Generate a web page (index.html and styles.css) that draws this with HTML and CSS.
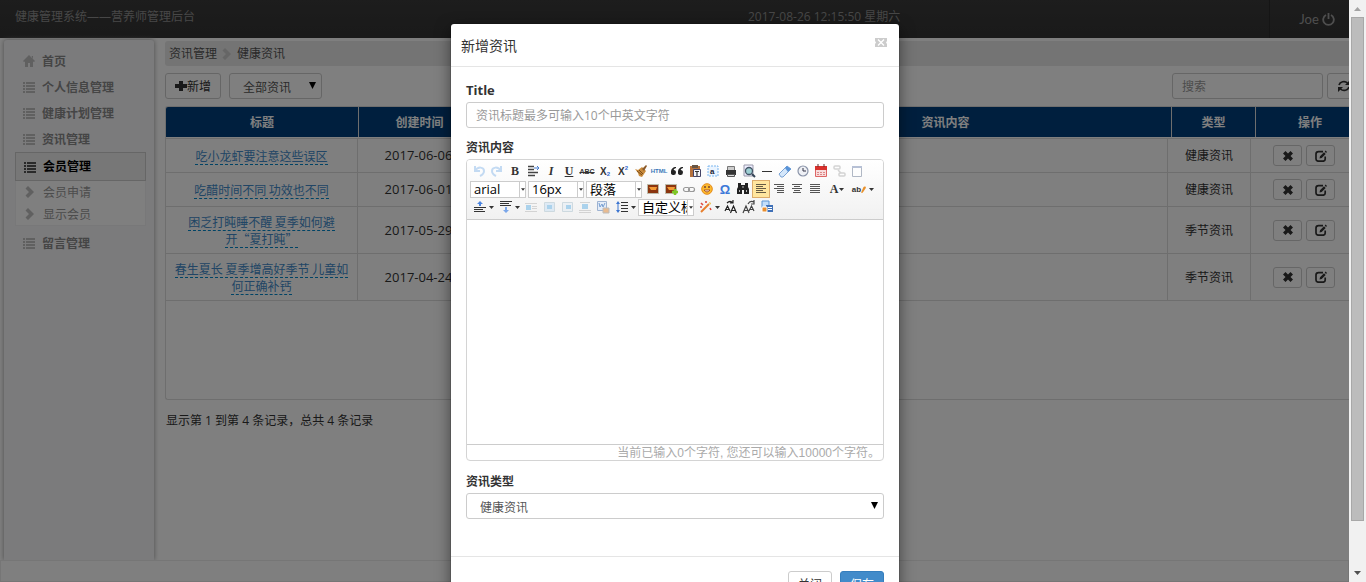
FILE: index.html
```html
<!DOCTYPE html>
<html lang="zh-CN">
<head>
<meta charset="utf-8">
<title>健康管理系统</title>
<link rel="stylesheet" href="styles.css">
</head>
<body>
<svg class="defs" aria-hidden="true">
  <symbol id="list" viewBox="0 0 12 12"><path d="M0 1h2v2H0zM3 1h9v2H3zM0 4h2v2H0zM3 4h9v2H3zM0 7h2v2H0zM3 7h9v2H3zM0 10h2v2H0zM3 10h9v2H3z"/></symbol>
  <symbol id="chev" viewBox="0 0 12 12"><path d="M1.500 2.500L4 0l6 6-6 6-2.500-2.500L5 6z"/></symbol>
  <symbol id="cross" viewBox="0 0 12 12"><path d="M1 3.500l2.500-2.500L6 3.500 8.500 1 11 3.500 8.500 6 11 8.500 8.500 11 6 8.500 3.500 11 1 8.500 3.500 6z"/></symbol>
  <symbol id="edit" viewBox="0 0 12 12"><path d="M8 1.600H3.500Q1 1.600 1 4v5q0 2.200 2.500 2.200h4.500Q10.200 11.200 10.200 9V6.500" fill="none" stroke="currentColor" stroke-width="1.700"/><path d="M4.500 8.500l.5-2.300 4-4 1.700 1.700-4 4zM9.700 1.600l1-1 1.300 1.300-1 1z"/></symbol>
  <symbol id="down" viewBox="0 0 8 8"><path d="M0 0h8L4 8z"/></symbol>
  <symbol id="caret" viewBox="0 0 5 3"><path d="M0 0h5L2.500 3z"/></symbol>
</svg>
<div class="window">
  <div class="page">
    <header class="navbar">
      <span class="brand">健康管理系统——营养师管理后台</span>
      <span class="clock">2017-08-26 12:15:50 星期六</span>
      <a class="user" href="#">Joe <svg width="13" height="13" viewBox="0 0 13 13" fill="none" stroke="currentColor" stroke-width="1.800"><path d="M4 2a5.300 5.300 0 1 0 5 0M6.500 0v6"/></svg></a>
    </header>
    <div class="columns">
      <nav class="sidebar">
        <a class="item" href="#"><svg class="ico" viewBox="0 0 12 12"><path d="M6 0l6 6-1 1-1-.5V12H7V8H5v4H2V6.500L1 7 0 6zM8.500 1H10v3z"/></svg>首页</a>
        <a class="item" href="#"><svg class="ico"><use href="#list"/></svg>个人信息管理</a>
        <a class="item" href="#"><svg class="ico"><use href="#list"/></svg>健康计划管理</a>
        <a class="item" href="#"><svg class="ico"><use href="#list"/></svg>资讯管理</a>
        <a class="item active" href="#"><svg class="ico"><use href="#list"/></svg>会员管理</a>
        <div class="submenu">
          <a href="#"><svg class="ico"><use href="#chev"/></svg>会员申请</a>
          <a href="#"><svg class="ico"><use href="#chev"/></svg>显示会员</a>
        </div>
        <a class="item" href="#"><svg class="ico"><use href="#list"/></svg>留言管理</a>
      </nav>
      <main class="main">
        <div class="crumbs"><a href="#">资讯管理</a><svg class="sep"><use href="#chev"/></svg><a href="#">健康资讯</a></div>
        <div class="tools">
          <button class="btn" type="button"><svg width="12" height="12" viewBox="0 0 12 12"><path d="M4 1h4v3h4v4H8v3H4V8H0V4h4z"/></svg>新增</button>
          <div class="picker filter"><select aria-label="资讯筛选"><option>全部资讯</option></select><svg><use href="#down"/></svg></div>
          <input class="field search" type="text" placeholder="搜索" aria-label="搜索">
          <button class="btn refresh" type="button" aria-label="刷新"><svg width="14" height="12" viewBox="0 0 14 12"><path d="M2 5a5 4.500 0 0 1 8.500-2M12 7a5 4.500 0 0 1-8.500 2" fill="none" stroke="currentColor" stroke-width="1.700"/><path d="M13 0v5H8zM1 12V7h5z"/></svg></button>
        </div>
        <div class="grid">
          <table class="head">
            <colgroup><col class="c-title"><col class="c-time"><col class="c-extra"><col><col class="c-type"><col class="c-act"></colgroup>
            <thead><tr><th>标题</th><th>创建时间</th><th></th><th>资讯内容</th><th>类型</th><th>操作</th></tr></thead>
          </table>
          <table class="rows">
            <colgroup><col class="c-title"><col class="c-time"><col class="c-extra"><col><col class="c-type"><col class="c-act"></colgroup>
            <tbody>
              <tr><td><a href="#">吃小龙虾要注意这些误区</a></td><td class="date">2017-06-06</td><td></td><td></td><td>健康资讯</td><td><div class="acts"><button type="button" aria-label="删除"><svg><use href="#cross"/></svg></button><button type="button" aria-label="编辑"><svg><use href="#edit"/></svg></button></div></td></tr>
              <tr><td><a href="#">吃醋时间不同 功效也不同</a></td><td class="date">2017-06-01</td><td></td><td></td><td>健康资讯</td><td><div class="acts"><button type="button" aria-label="删除"><svg><use href="#cross"/></svg></button><button type="button" aria-label="编辑"><svg><use href="#edit"/></svg></button></div></td></tr>
              <tr><td><a href="#">困乏打盹睡不醒 夏季如何避<br>开“夏打盹”</a></td><td class="date">2017-05-29</td><td></td><td></td><td>季节资讯</td><td><div class="acts"><button type="button" aria-label="删除"><svg><use href="#cross"/></svg></button><button type="button" aria-label="编辑"><svg><use href="#edit"/></svg></button></div></td></tr>
              <tr><td><a href="#">春生夏长 夏季增高好季节 儿童如<br>何正确补钙</a></td><td class="date">2017-04-24</td><td></td><td></td><td>季节资讯</td><td><div class="acts"><button type="button" aria-label="删除"><svg><use href="#cross"/></svg></button><button type="button" aria-label="编辑"><svg><use href="#edit"/></svg></button></div></td></tr>
            </tbody>
          </table>
        </div>
        <p class="info">显示第 1 到第 4 条记录，总共 4 条记录</p>
      </main>
    </div>
    <footer class="foot"></footer>

    <div class="overlay">
      <section class="modal" role="dialog" aria-labelledby="dlg">
        <div class="modal-head">
          <h4 id="dlg">新增资讯</h4>
          <button class="close" type="button" aria-label="关闭窗口"><svg width="12" height="9" viewBox="0 0 12 9"><path fill="#ccc" d="M0 0h12v9H0z"/><path d="M3 1.500l6 6M9 1.500l-6 6" stroke="#fff" stroke-width="1.300"/><path d="M0 3l1 1.500L0 6zM12 3l-1 1.500L12 6z" fill="#fff"/></svg></button>
        </div>
        <form class="modal-body">
          <label for="t">Title</label>
          <input class="field" id="t" type="text" placeholder="资讯标题最多可输入10个中英文字符">
          <label for="ed">资讯内容</label>
          <div class="editor">
            <div class="toolbar">
              <div class="trow">
                <button type="button" class="off" aria-label="撤销"><svg viewBox="0 0 16 16" fill="none" stroke="#5a9be0" stroke-width="2"><path d="M4 3v5h5M4 8c3-5 9-4 9 0 0 3-2 4-4 5"/></svg></button>
                <button type="button" class="off" aria-label="重做"><svg viewBox="0 0 16 16" fill="none" stroke="#5a9be0" stroke-width="2"><path d="M12 3v5H7M12 8C9 3 3 4 3 8c0 3 2 4 4 5"/></svg></button>
                <button type="button" class="ser b">B</button>
                <button type="button" aria-label="首行缩进"><svg viewBox="0 0 16 16"><path d="M3 3.500h6M3 6.500h6M3 9.500h10M3 12.500h7" stroke="#444" stroke-width="1.500"/><path d="M9 5h5M12 3l2 2-2 2" fill="none" stroke="#4a7fd0"/></svg></button>
                <button type="button" class="ser i">I</button>
                <button type="button" class="ser u">U</button>
                <button type="button" class="strike">ABC</button>
                <button type="button" class="sub">X<i>2</i></button>
                <button type="button" class="sup">X<i>2</i></button>
                <button type="button" aria-label="格式刷"><svg viewBox="0 0 16 16"><path d="M2 6l3 1 4-3 4 4-4 6-3-1-1-3z" fill="#c98b3c"/><path d="M4 8l5 4M6 7l4 4" stroke="#7a4d1c"/><path d="M9 6l4-4 1 1-3 5z" fill="#8b5a2b"/></svg></button>
                <button type="button" class="html">HTML</button>
                <button type="button" aria-label="引用"><svg viewBox="0 0 16 16" fill="#222"><path d="M7 4C4 4 2 6 2 9a2.500 2.500 0 1 0 2.500-2Q5 5.500 7 5zM14 4c-3 0-5 2-5 5a2.500 2.500 0 1 0 2.500-2Q12 5.500 14 5z"/></svg></button>
                <button type="button" aria-label="纯文本粘贴"><svg viewBox="0 0 16 16"><path d="M3 3h10v11H3z" fill="#b5713c"/><path d="M5 2h6v3H5z" fill="#654"/><path d="M6.500 6.500h7v7h-7z" fill="#f4f6fa" stroke="#446"/><path d="M8 8.500h4M10 8v5" stroke="#333" stroke-width="1.200"/></svg></button>
                <button type="button" aria-label="全选"><svg viewBox="0 0 16 16"><path d="M3 3h10v10H3z" fill="#eaf4ff" stroke="#7bb6ef" stroke-dasharray="2 1"/><text x="5" y="11" class="tiny">a</text></svg></button>
                <button type="button" aria-label="打印"><svg viewBox="0 0 16 16"><path d="M4.500 3.500h7v5h-7z" fill="#ccc" stroke="#777"/><path d="M3 7h10v5H3z" fill="#333"/><path d="M4.500 11.500h7v2h-7z" fill="#ddd" stroke="#555"/></svg></button>
                <button type="button" aria-label="预览"><svg viewBox="0 0 16 16"><path d="M3 2h9v11H3z" fill="#eef" stroke="#99a"/><circle cx="8" cy="8" r="3.500" fill="#9ed0d4" stroke="#456" stroke-width="1.300"/><path d="M11 11l3 3" stroke="#345" stroke-width="2"/></svg></button>
                <button type="button" aria-label="分隔线"><svg viewBox="0 0 16 16"><path d="M3 8.500h10" stroke="#333"/></svg></button>
                <button type="button" aria-label="清除格式"><svg viewBox="0 0 16 16"><path d="M2 11l8-8 4 3-8 8H4z" fill="#d4e7fb" stroke="#7ba3d4"/><path d="M8 5l2-2 4 3-3 3z" fill="#5893d8"/></svg></button>
                <button type="button" aria-label="时间"><svg viewBox="0 0 16 16"><circle cx="8" cy="8" r="5" fill="#eef0f5" stroke="#8993a8" stroke-width="1.200"/><path d="M8 5v3h3" fill="none" stroke="#334"/></svg></button>
                <button type="button" aria-label="日期"><svg viewBox="0 0 16 16"><path d="M2.500 3.500h11v10h-11z" fill="#f8dcdc" stroke="#d66"/><path d="M2 3h12v4H2z" fill="#d9302c"/><path d="M5 1v3M11 1v3" stroke="#633"/><path d="M4 9.500h8M4 11.500h8" stroke="#d88" stroke-dasharray="2 1"/></svg></button>
                <button type="button" class="off" aria-label="取消链接"><svg viewBox="0 0 16 16" fill="none" stroke="#888" stroke-width="1.500"><rect x="3" y="3" width="6" height="3" rx="1"/><path d="M7 7l3 3"/><rect x="8" y="10" width="6" height="3" rx="1"/></svg></button>
                <button type="button" class="dim" aria-label="模板"><svg viewBox="0 0 16 16"><path d="M3.500 3.500h9v10h-9z" fill="#fff" stroke="#7f8ba0"/><path d="M3 3h10v2H3z" fill="#89b"/></svg></button>
              </div>
              <div class="trow">
                <span class="combo"><select aria-label="字体"><option>arial</option></select><svg><use href="#caret"/></svg></span>
                <span class="combo"><select aria-label="字号"><option>16px</option></select><svg><use href="#caret"/></svg></span>
                <span class="combo"><select aria-label="段落格式"><option>段落</option></select><svg><use href="#caret"/></svg></span>
                <button type="button" aria-label="图片"><svg viewBox="0 0 16 16"><path d="M2.500 3.500h11v9h-11z" fill="#8a3510" stroke="#bba"/><path d="M4 6h8l-1 3H6z" fill="#f39a35"/></svg></button>
                <button type="button" aria-label="多图上传"><svg viewBox="0 0 16 16"><path d="M2.500 3.500h11v9h-11z" fill="#8a3510" stroke="#bba"/><path d="M4 6h8l-1 3H6z" fill="#f39a35"/><path d="M9 11h6M12 8v6" stroke="#7ec825" stroke-width="2.500"/></svg></button>
                <button type="button" aria-label="超链接"><svg viewBox="0 0 16 16" fill="none" stroke="#999" stroke-width="1.200"><rect x="2.500" y="6.500" width="6" height="4" rx="2"/><rect x="7.500" y="6.500" width="6" height="4" rx="2"/></svg></button>
                <button type="button" aria-label="表情"><svg viewBox="0 0 16 16"><circle cx="8" cy="8" r="5.300" fill="#fbb92e" stroke="#e68b1a"/><path d="M6 5v2M10 5v2" stroke="#743" stroke-width="1.500"/><path d="M5 9q3 4 6 0z" fill="#fff" stroke="#a52"/></svg></button>
                <button type="button" class="omega">Ω</button>
                <button type="button" aria-label="查找替换"><svg viewBox="0 0 16 16" fill="#222"><path d="M3 2h3v2h4V2h3v4l1 2v5H9V9H7v4H2V8l1-2z"/><path d="M4.500 9v2M11.500 9v2M8 5v2" stroke="#bbb"/></svg></button>
                <button type="button" class="on" aria-label="左对齐"><svg viewBox="0 0 16 16" stroke="#655b45"><path d="M3 3.500h10M3 5.500h7M3 7.500h10M3 9.500h7M3 11.500h10"/></svg></button>
                <button type="button" aria-label="右对齐"><svg viewBox="0 0 16 16" stroke="#555"><path d="M3 3.500h10M6 5.500h7M3 7.500h10M6 9.500h7M6 11.500h7"/></svg></button>
                <button type="button" aria-label="居中"><svg viewBox="0 0 16 16" stroke="#555"><path d="M3 3.500h10M5 5.500h6M3 7.500h10M5 9.500h6M4 11.500h8"/></svg></button>
                <button type="button" aria-label="两端对齐"><svg viewBox="0 0 16 16" stroke="#555"><path d="M3 3.500h10M3 5.500h10M3 7.500h10M3 9.500h10M3 11.500h10"/></svg></button>
                <button type="button" class="ser split">A<svg class="dd"><use href="#caret"/></svg></button>
                <button type="button" class="split mark">ab<svg class="pen" viewBox="0 0 6 10"><path d="M0 9l3-7 2-1 1 2-4 6z" fill="#e8912d"/></svg><svg class="dd"><use href="#caret"/></svg></button>
              </div>
              <div class="trow">
                <button type="button" class="split" aria-label="段前距"><svg viewBox="0 0 16 16"><path d="M2 8.500h12M2 10.500h9M2 12.500h11" stroke="#333" stroke-width="1.200"/><path d="M7 7V5H5l3-3 3 3H9v2z" fill="#4b85e0"/></svg><svg class="dd"><use href="#caret"/></svg></button>
                <button type="button" class="split" aria-label="段后距"><svg viewBox="0 0 16 16"><path d="M2 2.500h12M2 4.500h9M2 6.500h11" stroke="#333" stroke-width="1.200"/><path d="M7 8v3H5l3 3 3-3H9V8z" fill="#7ba7ea"/></svg><svg class="dd"><use href="#caret"/></svg></button>
                <button type="button" class="off" aria-label="图片默认"><svg viewBox="0 0 16 16"><path d="M2 4.500h12M9 7.500h5M9 9.500h5M2 12.500h12" stroke="#999"/><path d="M3 6h5v5H3z" fill="#2596df"/></svg></button>
                <button type="button" class="off" aria-label="图片左浮动"><svg viewBox="0 0 16 16"><path d="M3.500 3.500h10v9h-10z" fill="#b5d7f5" stroke="#8ab"/><path d="M6 6h5v4H6z" fill="#2596df"/></svg></button>
                <button type="button" class="off" aria-label="图片右浮动"><svg viewBox="0 0 16 16"><path d="M3.500 3.500h10v9h-10z" fill="#dce9f5" stroke="#8ab"/><path d="M7 6h5v4H7z" fill="#2596df"/></svg></button>
                <button type="button" class="off" aria-label="图片居中"><svg viewBox="0 0 16 16"><path d="M3 3.500h10M2 11.500h12M2 13.500h12" stroke="#999"/><path d="M5 5h6v5H5z" fill="#2596df"/></svg></button>
                <button type="button" class="dim" aria-label="图片转存"><svg viewBox="0 0 16 16"><path d="M2.500 2.500h9v9h-9z" fill="#dbe8fb" stroke="#68b"/><path d="M4 4l1 4 2-3 1 3 2-4" fill="none" stroke="#26b"/><path d="M8 9h6v5H8z" fill="#e3964f" stroke="#999"/></svg></button>
                <button type="button" class="split" aria-label="行间距"><svg viewBox="0 0 16 16"><path d="M7 3.500h7M7 6.500h7M7 9.500h7M7 12.500h7" stroke="#333" stroke-width="1.200"/><path d="M4 4v8" stroke="#3b74d0"/><path d="M2 5l2-3 2 3zM2 11l2 3 2-3z" fill="#3b74d0"/></svg><svg class="dd"><use href="#caret"/></svg></button>
                <span class="combo"><select aria-label="自定义标题"><option>自定义标题</option></select><svg><use href="#caret"/></svg></span>
                <button type="button" class="split" aria-label="自动排版"><svg viewBox="0 0 16 16"><path d="M3 13l8-8" stroke="#e77e2c" stroke-width="2"/><path d="M3 4l2 2M8 2v2M12 9l1 2M2 8h2" stroke="#e04a3c" stroke-width="1.600"/><path d="M11 3l2 1-1 2z" fill="#e9b62c"/></svg><svg class="dd"><use href="#caret"/></svg></button>
                <button type="button" class="caps" aria-label="大写"><svg viewBox="0 0 16 16" fill="none" stroke="#222" stroke-width="1.200"><path d="M2 12l2.500-5L7 12M3 10.500h3M7.500 14l3-7 3 7M9 11.500h4M4 4q3-3 6 0M10 1v3H7"/></svg></button>
                <button type="button" class="caps" aria-label="小写"><svg viewBox="0 0 16 16" fill="none" stroke="#444" stroke-width="1.200"><path d="M2 14l3-7 3 7M3 11.500h4M8 12l2.500-5L13 12M9 10.500h3M7 5q2-4 6-2M13 1v4h-3"/></svg></button>
                <button type="button" aria-label="背景"><svg viewBox="0 0 16 16"><path d="M3 2h7v7H3z" fill="#c3defa" stroke="#5d94d2"/><path d="M7 6h7v7H7z" fill="#3f70b7"/><path d="M3 8h5v5H3z" fill="#e88e2f" stroke="#fff"/><path d="M9 8.500h4M9 10.500h4" stroke="#fff"/></svg></button>
              </div>
            </div>
            <textarea id="ed"></textarea>
            <div class="count">当前已输入0个字符, 您还可以输入10000个字符。</div>
          </div>
          <label for="kind">资讯类型</label>
          <div class="picker"><select id="kind"><option>健康资讯</option></select><svg><use href="#down"/></svg></div>
        </form>
        <div class="modal-foot">
          <button class="btn" type="button">关闭</button>
          <button class="btn primary" type="button">保存</button>
        </div>
      </section>
    </div>
  </div>
  <div class="scroll" aria-hidden="true">
    <svg viewBox="0 0 17 17"><path d="M5 11h7L8.500 7z" fill="#a3a3a3"/></svg>
    <div class="track"><div class="thumb"></div></div>
    <svg viewBox="0 0 17 17"><path d="M5 6h7L8.500 10z" fill="#505050"/></svg>
  </div>
</div>
</body>
</html>
```
FILE: styles.css
```css
* { box-sizing: border-box; }
body { margin: 0; overflow: hidden; font: 12px/17px "Open Sans", "Noto Sans CJK SC", sans-serif; color: #333; fill: currentColor; }
button, input, select, textarea { font: inherit; color: inherit; margin: 0; }
button { padding: 0; cursor: pointer; }
a { text-decoration: none; }
svg { flex: none; }
.defs { display: none; }
.window { display: flex; height: 100vh; }
.page { position: relative; flex: 1; min-width: 0; display: flex; flex-direction: column; overflow: hidden; background: #fff; }

.navbar { display: grid; grid-template-columns: 748fr 521fr 80px; height: 38px; line-height: 34px; background: linear-gradient(#3a3a3a, #343434); color: #8f8f8f; }
.brand { padding-left: 15px; }
.user { display: flex; align-items: center; justify-content: center; gap: 3px; padding-left: 15px; border-left: 1px solid #2a2a2a; color: #9d9d9d; font: 13px Lato, sans-serif; }

.columns { flex: 1; display: flex; min-height: 0; padding-top: 2px; }
.sidebar { width: 150px; margin-left: 4px; padding: 8px 8px 0 11px; background: #f6f6f9; box-shadow: 0 0 5px #999; border-radius: 3px 3px 0 0; }
.item { display: flex; align-items: center; gap: 7px; height: 26px; padding-left: 8px; font-weight: 700; color: #8a8a8a; }
.ico { width: 12px; height: 12px; color: #c0c0c0; }
.item.active { height: 29px; border: 1px solid #ccc; background: #eee; color: #000; }
.active .ico { color: #555; }
.submenu { margin-bottom: 4px; padding: 0 0 0 8px; border: 1px solid #f0f0f2; border-top: 0; background: #fefefe; }
.submenu a { display: flex; align-items: center; gap: 7px; height: 22px; color: #999; }
.submenu .ico { height: 12px; }

.main { flex: 1; min-width: 0; margin-left: 11px; padding-top: 1px; overflow: hidden; }
.crumbs { display: flex; align-items: center; height: 25px; padding-left: 4px; background: #e8e8e8; border-radius: 3px 0 0 3px; }
.crumbs a { color: #555; }
.sep { width: 12px; height: 12px; margin: 0 4px; color: #ccc; }
.tools { display: flex; margin: 7px -12px 7px 0; }
.btn { display: inline-flex; align-items: center; justify-content: center; height: 26px; padding: 0 9px; border: 1px solid #ccc; border-radius: 3px; background: #fff; color: #333; }
.picker { position: relative; }
.picker select { appearance: none; width: 100%; height: 26px; padding: 2px 13px 0; border: 1px solid #ccc; border-radius: 3px; background: #fff; color: #555; }
.picker svg { position: absolute; right: 6px; top: 9px; width: 7px; height: 7px; color: #000; pointer-events: none; }
.filter { width: 93px; margin-left: 8px; }
.field { width: 100%; height: 26px; padding: 0 9px; border: 1px solid #ccc; border-radius: 3px; background: #fff; }
.field::placeholder { color: #999; }
.search { width: 151px; margin: 0 4px 0 auto; }
.refresh { width: 34px; }

.grid { height: 294px; border: 1px solid #ddd; border-right: 0; border-radius: 3px 0 0 3px; overflow: hidden; }
table { table-layout: fixed; border-collapse: separate; border-spacing: 0; text-align: center; }
.head { width: calc(100% + 15px); }
.rows { width: calc(100% + 9px); margin-top: 1px; border-top: 1px solid #ddd; }
.c-title { width: 192px; }
.c-time { width: 122px; }
.c-extra { width: 239px; }
.c-type { width: 84px; }
.c-act { width: 109px; }
.rows .c-type { width: 83px; }
.rows .c-act { width: 107px; }
th { height: 30px; padding: 0; background: #003f7d; color: #fff; border-left: 1px solid #ddd; }
th:first-child { border-left: 0; }
td { height: 34px; padding: 6px 0; border-right: 1px solid #ddd; border-bottom: 1px solid #ddd; }
td:first-child { font-family: "Noto Sans CJK SC", sans-serif; }
td a { border-bottom: 1px dashed #08c; color: #428bca; }
.date { font-size: 13px; }
.acts { display: flex; justify-content: center; gap: 4px; }
.acts button { display: flex; align-items: center; justify-content: center; width: 29px; height: 21px; border: 1px solid #ccc; border-radius: 3px; background: #fff; color: #333; }
.acts svg { width: 12px; height: 12px; }
.info { margin: 12px 1px; }
.foot { height: 22px; border: 1px solid #ececec; background: #fff; z-index: 0; }

.overlay { position: absolute; inset: 0; z-index: 1; overflow: hidden; padding: 24px 0 0 1px; background: rgba(0, 0, 0, .5); }
.modal { width: 448px; margin: 0 auto; background: #fff; border-radius: 3px; box-shadow: 0 5px 15px rgba(0, 0, 0, .5), 0 0 1px #000; }
.modal-head { display: flex; align-items: center; justify-content: space-between; height: 43px; padding: 0 12px 0 10px; border-bottom: 1px solid #e5e5e5; }
h4 { margin: 0; font-size: 14px; font-weight: 400; }
.close { display: flex; margin-bottom: 6px; border: 0; background: none; }
.modal-body { height: 489px; padding: 15px; }
label { display: block; padding-bottom: 3px; font-weight: 700; }
.field + label { padding-top: 11px; }
.editor + label { padding-top: 12px; }
label[for="t"] { font-size: 13px; }
.modal-foot { display: flex; justify-content: flex-end; gap: 8px; padding: 14px 15px; border-top: 1px solid #e5e5e5; }
.primary { border-color: #357ebd; background: #428bca; color: #fff; }

.editor { border: 1px solid #d4d4d4; border-radius: 4px; overflow: hidden; }
.toolbar { height: 60px; padding: 2px 3px 3px; border-bottom: 1px solid #ccc; background: linear-gradient(#fff, #f1f1f1); box-shadow: 0 1px 4px #ddd; }
.trow { display: flex; align-items: center; height: 18px; }
.trow button { display: flex; align-items: center; justify-content: center; width: 18px; height: 18px; border: 0; background: none; white-space: nowrap; color: #333; }
.trow button > svg { width: 16px; height: 16px; }
.trow button.off { opacity: .35; }
.trow button.dim { opacity: .6; }
.trow button.on { border: 1px solid #dcac6c; background: #ffe69f; }
.trow button.ser { font: 700 12px "Liberation Serif", serif; }
.trow button.i { font-style: italic; }
.trow button.u { text-decoration: underline; }
.trow button.strike { font: 700 7px "Liberation Sans", sans-serif; text-decoration: line-through; }
.trow button.sub, .trow button.sup { font: 700 10px "Liberation Sans", sans-serif; }
.sub i, .sup i { font-size: 6px; font-style: normal; color: #36c; }
.sub i { padding-top: 6px; }
.sup i { padding-bottom: 6px; }
.trow button.html { font: 700 6px "Liberation Sans", sans-serif; color: #3a78b8; }
.trow button.omega { font: 700 13px "Liberation Sans", sans-serif; color: #3c78d8; }
.tiny { font: 700 8px "Liberation Sans", sans-serif; fill: #223; }
.trow button.split { width: 26px; gap: 1px; }
.trow .split .dd { width: 5px; height: 3px; }
.trow .split .pen { width: 5px; height: 9px; }
.trow button.mark { gap: 0; font: 700 8px "Liberation Sans", sans-serif; }
.trow .mark .dd { margin-left: 3px; }
.combo { display: flex; align-items: center; width: 56px; height: 17px; margin-right: 2px; border: 1px solid #ccc; background: #fff; }
.combo select { appearance: none; width: 49px; height: 15px; padding: 0 0 0 3px; border: 0; border-right: 1px solid #ccc; background: none; line-height: 15px; color: #000; font-size: 13px; }
.combo svg { width: 4px; height: 3px; margin-left: 1px; }
textarea { display: block; width: 100%; height: 224px; border: 0; resize: none; outline: 0; }
.count { height: 16px; padding: 0 3px; border-top: 1px solid #ccc; text-align: right; line-height: 16px; font-family: "Liberation Sans", "Noto Sans CJK SC", sans-serif; color: #aaa; }

.scroll { display: flex; flex-direction: column; width: 17px; background: #f1f1f1; }
.scroll svg { width: 17px; height: 17px; }
.track { flex: 1; padding: 0 2px; }
.thumb { height: 92%; border: 1px solid #a8a8a8; background: #bcbcbc; }
```
